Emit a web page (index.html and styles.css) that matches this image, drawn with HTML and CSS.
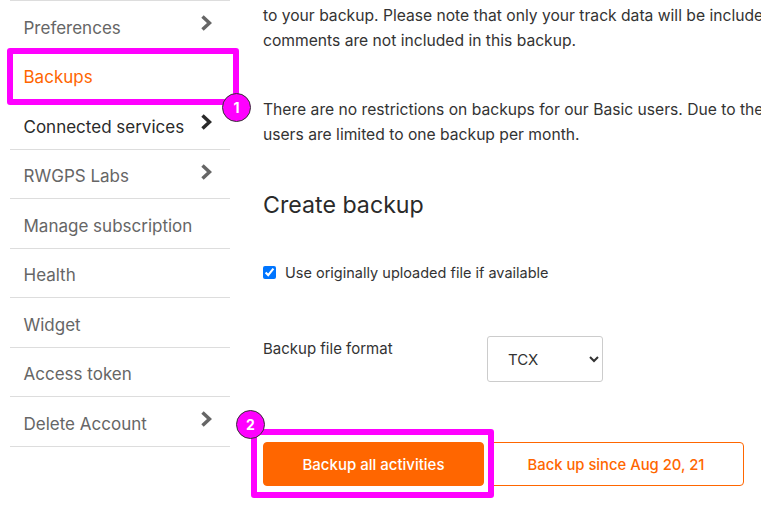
FILE: index.html
```html
<!DOCTYPE html>
<html lang="en">
<head>
<meta charset="utf-8">
<title>Backups</title>
<link rel="stylesheet" href="styles.css">
</head>
<body>
<div class="page">
  <nav class="side">
    <div class="item muted"><span>Preferences</span><svg class="chev" viewBox="0 0 12 16"><path d="M2.500 1.500 9.500 8l-7 6.500"/></svg></div>
    <div class="item active"><span>Backups</span></div>
    <div class="item dark"><span>Connected services</span><svg class="chev" viewBox="0 0 12 16"><path d="M2.500 1.500 9.500 8l-7 6.500"/></svg></div>
    <div class="item muted"><span>RWGPS Labs</span><svg class="chev" viewBox="0 0 12 16"><path d="M2.500 1.500 9.500 8l-7 6.500"/></svg></div>
    <div class="item muted"><span>Manage subscription</span></div>
    <div class="item muted"><span>Health</span></div>
    <div class="item muted"><span>Widget</span></div>
    <div class="item muted"><span>Access token</span></div>
    <div class="item muted"><span>Delete Account</span><svg class="chev" viewBox="0 0 12 16"><path d="M2.500 1.500 9.500 8l-7 6.500"/></svg></div>
  </nav>
  <main class="main">
    <p class="para first">to your backup. Please note that only your track data will be included, photos and<br>comments are not included in this backup.</p>
    <p class="para second">There are no restrictions on backups for our Basic users. Due to the size of these files, free<br>users are limited to one backup per month.</p>
    <h2 class="title">Create backup</h2>
    <label class="check"><input type="checkbox" checked><span>Use originally uploaded file if available</span></label>
    <div class="format">
      <span class="format-label">Backup file format</span>
      <select class="select"><option>TCX</option></select>
    </div>
    <div class="actions">
      <button class="btn solid">Backup all activities</button>
      <button class="btn outline">Back up since Aug 20, 21</button>
    </div>
  </main>
  <div class="mark mark-a"></div>
  <div class="badge badge-a">1</div>
  <div class="mark mark-b"></div>
  <div class="badge badge-b">2</div>
</div>
</body>
</html>
```
FILE: styles.css
```css
html, body { margin: 0; padding: 0; background: #fff; }
.page { position: relative; width: 761px; height: 506px; overflow: hidden; font-family: Inter, "Liberation Sans", sans-serif; color: #333; display: flex; }
.side { width: 220px; margin-left: 10px; flex: none; margin-top: 0; border-top: 1px solid #ddd; align-self: flex-start; }
.item { height: 49.500px; box-sizing: border-box; border-bottom: 1px solid #ddd; display: flex; align-items: center; justify-content: space-between; font-size: 17px; padding: 5px 13.500px 0; }
.muted { color: #666; }
.dark { color: #2a2a2a; }
.active { color: #f60; }
.chev { width: 12px; height: 16px; fill: none; stroke: currentColor; stroke-width: 3.500; margin-top: -9px; margin-right: 5px; }
.main { margin-left: 33px; width: 740px; flex: none; font-size: 15.650px; line-height: 25px; }
.para { margin: 0; }
.first { margin-top: 3px; }
.second { margin-top: 43.500px; }
.title { font-size: 23.200px; font-weight: 400; line-height: 30px; margin: 43.500px 0 0; color: #2a2a2a; }
.check { display: flex; align-items: center; gap: 9px; margin-top: 40px; font-size: 14.500px; }
.check input { width: 13px; height: 13px; margin: 0; accent-color: #0075ff; }
.format { display: flex; align-items: flex-start; margin-top: 50.500px; }
.format-label { width: 224px; font-size: 15px; }
.select { width: 116px; height: 46px; background: #fff; border: 1px solid #ccc; border-radius: 3px; padding: 2px 16px 0; font: inherit; font-size: 15px; color: #333; }
.actions { display: flex; gap: 4px; margin-top: 60px; }
.btn { height: 44px; border-radius: 4px; font: 500 15px Inter, sans-serif; box-sizing: border-box; padding-top: 3px; }
.solid { width: 221px; background: #f60; color: #fff; border: 1px solid #f60; }
.outline { width: 256px; background: #fff; color: #f60; border: 1px solid #f60; font-size: 14.800px; }
.mark { position: absolute; border: 6px solid #f0f; border-radius: 3px; box-sizing: border-box; }
.mark-a { left: 7px; top: 48px; width: 232px; height: 57px; }
.mark-b { left: 251px; top: 429px; width: 243px; height: 69px; }
.badge { position: absolute; width: 29px; height: 29px; border-radius: 50%; background: #f0f; border: 1px solid #333; box-sizing: border-box; color: #fff; font: 700 14px/27px Inter, sans-serif; text-align: center; }
.badge-a { left: 222px; top: 93px; }
.badge-b { left: 236px; top: 410px; }
```
